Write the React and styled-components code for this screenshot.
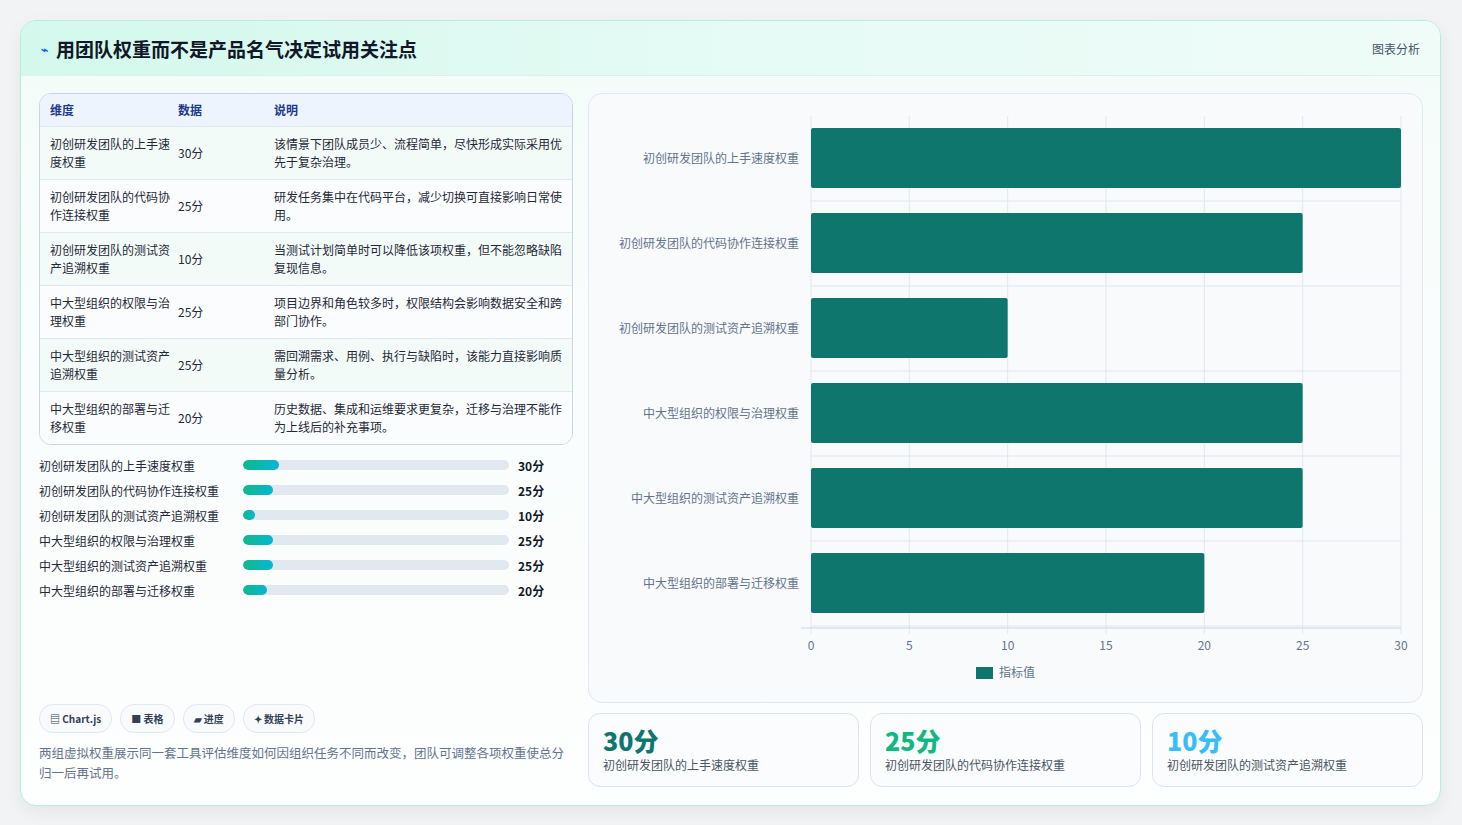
import React from 'react'
import styled, { createGlobalStyle } from 'styled-components'

const rows = [
  { name: '初创研发团队的上手速度权重', v: 30, note: '该情景下团队成员少、流程简单，尽快形成实际采用优先于复杂治理。' },
  { name: '初创研发团队的代码协作连接权重', v: 25, note: '研发任务集中在代码平台，减少切换可直接影响日常使用。' },
  { name: '初创研发团队的测试资产追溯权重', v: 10, note: '当测试计划简单时可以降低该项权重，但不能忽略缺陷复现信息。' },
  { name: '中大型组织的权限与治理权重', v: 25, note: '项目边界和角色较多时，权限结构会影响数据安全和跨部门协作。' },
  { name: '中大型组织的测试资产追溯权重', v: 25, note: '需回溯需求、用例、执行与缺陷时，该能力直接影响质量分析。' },
  { name: '中大型组织的部署与迁移权重', v: 20, note: '历史数据、集成和运维要求更复杂，迁移与治理不能作为上线后的补充事项。' },
]

const Global = createGlobalStyle`
  body { margin: 0; background: #f1f3f5; font-family: "Noto Sans CJK SC", "Noto Sans", sans-serif; }
`
const Page = styled.div`padding: 20px 21px 22px 20px;`
const Card = styled.div`
  background: linear-gradient(180deg, #f2fcf8 0%, #fafdfd 40%, #fdfefe 100%);
  border: 1px solid #b9ecdf; border-radius: 16px; overflow: hidden;
  box-shadow: 0 6px 18px rgba(0,0,0,0.06);
`
const Header = styled.div`
  height: 54px; display: flex; align-items: center; justify-content: space-between;
  padding: 0 20px; background: linear-gradient(90deg, #d3f8ec, #e8fbf6 60%, #effcf8);
  border-bottom: 1px solid #d8f3ea;
`
const Title = styled.h1`
  margin: 0; font-size: 19px; font-weight: 700; color: #111827; display: flex; align-items: center; gap: 8px;
  span { color: #2563eb; font-size: 12px; }
`
const Tag = styled.div`font-size: 12px; color: #475569;`
const Body = styled.div`display: grid; grid-template-columns: 534px 835px; gap: 15px; padding: 17px 18px 18px 18px;`
const Left = styled.div`display: flex; flex-direction: column; height: 690px;`
const Table = styled.div`border: 1px solid #cbd5e1; border-radius: 12px; overflow: hidden; background: #fbfdfe;`
const Row = styled.div`
  display: grid; grid-template-columns: 128px 96px 1fr; padding: 0 10px; font-size: 12px; line-height: 18px;
  color: #1f2937; border-top: ${p => p.$head ? 'none' : '1px solid #e2e8f0'};
  background: ${p => p.$head ? '#eef4fe' : p.$odd ? '#f3fbf8' : '#fafcfd'};
  height: ${p => p.$head ? '32px' : '52px'}; align-items: center;
  font-weight: ${p => p.$head ? 600 : 400};
  ${p => p.$head && 'color: #1e3a8a;'}
`
const Bars = styled.div`display: flex; flex-direction: column; gap: 7px; margin-top: 11px;`
const BarRow = styled.div`display: grid; grid-template-columns: 195px 266px 1fr; gap: 0 9px; align-items: center; font-size: 12px; color: #1f2937; height: 18px;`
const Track = styled.div`height: 10px; border-radius: 5px; background: #e2e8f0; overflow: hidden;`
const Fill = styled.div`height: 100%; border-radius: 5px; background: linear-gradient(90deg, #10b98a, #06b6d4);`
const Val = styled.div`font-weight: 700; font-size: 12px; color: #111827;`
const Chips = styled.div`display: flex; gap: 8px; margin-top: auto;`
const Chip = styled.div`font-size: 10px; font-weight: 600; color: #334155; border: 1px solid #e2e8f0; border-radius: 14px; padding: 6px 10px; background: #f8fafc;`
const Foot = styled.p`margin: 10px 0 0; font-size: 12.5px; line-height: 20px; color: #64748b;`
const Right = styled.div`display: flex; flex-direction: column; gap: 10px;`
const ChartBox = styled.div`height: 608px; border: 1px solid #e2e8f0; border-radius: 14px; background: #f8fafc; position: relative;`
const Stats = styled.div`display: grid; grid-template-columns: repeat(3, 1fr); gap: 11px;`
const Stat = styled.div`border: 1px solid #dbe4ee; border-radius: 12px; background: #fafcfd; padding: 10px 14px; height: 52px;`
const Big = styled.div`font-size: 25px; font-weight: 800; color: ${p => p.$c}; line-height: 32px;`
const Small = styled.div`font-size: 12px; color: #4b5563;`

function Chart() {
  const x0 = 222, x1 = 812, y0 = 22, rh = 85
  const X = v => x0 + (x1 - x0) * v / 30
  return (
    <svg width="835" height="608" style={{ display: 'block' }}>
      {[0, 5, 10, 15, 20, 25, 30].map(t => (
        <g key={t}>
          <line x1={X(t)} x2={X(t)} y1={y0} y2={y0 + 6 * rh + 8} stroke="#e2e8f0" />
          <text x={X(t)} y={556} textAnchor="middle" fontSize="12" fill="#64748b">{t}</text>
        </g>
      ))}
      {rows.map((r, i) => (
        <g key={i}>
          <line x1={x0} x2={x1} y1={y0 + i * rh + 85} y2={y0 + i * rh + 85} stroke="#e2e8f0" />
          <text x={x0 - 12} y={y0 + i * rh + 47} textAnchor="end" fontSize="12" fill="#64748b">{r.name}</text>
          <rect x={x0} y={y0 + i * rh + 12} width={X(r.v) - x0} height={60} rx="2" fill="#0f766e" />
        </g>
      ))}
      <line x1={x0 - 10} x2={x1} y1={y0 + 6 * rh + 2} y2={y0 + 6 * rh + 2} stroke="#cbd5e1" />
      <rect x={387} y={573} width={17} height={12} fill="#0f766e" />
      <text x={410} y={583} fontSize="12" fill="#64748b">指标值</text>
    </svg>
  )
}

export default function App() {
  return (
    <Page>
      <Global />
      <Card>
        <Header>
          <Title><span>⌁</span>用团队权重而不是产品名气决定试用关注点</Title>
          <Tag>图表分析</Tag>
        </Header>
        <Body>
          <Left>
            <Table>
              <Row $head><div>维度</div><div>数据</div><div>说明</div></Row>
              {rows.map((r, i) => (
                <Row key={i} $odd={i % 2 === 0}><div>{r.name.replace(/^(.{8})/, '$1')}</div><div>{r.v}分</div><div>{r.note}</div></Row>
              ))}
            </Table>
            <Bars>
              {rows.map((r, i) => (
                <BarRow key={i}><div>{r.name}</div><Track><Fill style={{ width: `${r.v / 2.22}%` }} /></Track><Val>{r.v}分</Val></BarRow>
              ))}
            </Bars>
            <Chips><Chip>▤ Chart.js</Chip><Chip>■ 表格</Chip><Chip>▰ 进度</Chip><Chip>✦ 数据卡片</Chip></Chips>
            <Foot>两组虚拟权重展示同一套工具评估维度如何因组织任务不同而改变，团队可调整各项权重使总分归一后再试用。</Foot>
          </Left>
          <Right>
            <ChartBox><Chart /></ChartBox>
            <Stats>
              <Stat><Big $c="#0f766e">30分</Big><Small>初创研发团队的上手速度权重</Small></Stat>
              <Stat><Big $c="#10b981">25分</Big><Small>初创研发团队的代码协作连接权重</Small></Stat>
              <Stat><Big $c="#38bdf8">10分</Big><Small>初创研发团队的测试资产追溯权重</Small></Stat>
            </Stats>
          </Right>
        </Body>
      </Card>
    </Page>
  )
}
